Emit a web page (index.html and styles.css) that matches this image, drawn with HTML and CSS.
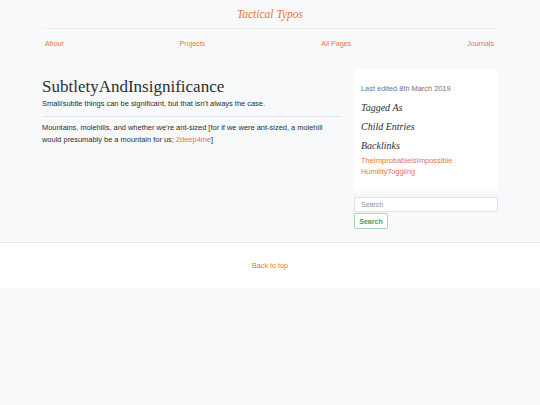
FILE: index.html
```html
<!DOCTYPE html>
<html>
<head>
<meta charset="utf-8">
<link rel="stylesheet" href="styles.css">
</head>
<body>
<header class="container">
  <div class="site-title"><a href="#">Tactical Typos</a></div>
  <hr class="rule">
  <nav class="nav">
    <a href="#">About</a>
    <a href="#">Projects</a>
    <a href="#">All Pages</a>
    <a href="#">Journals</a>
  </nav>
</header>
<main class="container row">
  <article class="content">
    <h1 class="page-title">SubtletyAndInsignificance</h1>
    <p class="lead">Small/subtle things can be significant, but that isn't always the case.</p>
    <hr class="rule divider">
    <p class="body-text">Mountains, molehills, and whether we're ant-sized [for if we were ant-sized, a molehill would presumably be a mountain for us; <a href="#">2deep4me</a>]</p>
  </article>
  <aside class="sidebar">
    <div class="card">
      <p class="meta">Last edited 8th March 2019</p>
      <h3 class="side-head">Tagged As</h3>
      <h3 class="side-head">Child Entries</h3>
      <h3 class="side-head">Backlinks</h3>
      <ul class="links">
        <li><a href="#">TheImprobableIsImpossible</a></li>
        <li><a href="#">HumilityToggling</a></li>
      </ul>
    </div>
    <form class="search">
      <input class="search-input" type="text" placeholder="Search">
      <button class="search-btn" type="button">Search</button>
    </form>
  </aside>
</main>
<footer class="footer">
  <a href="#">Back to top</a>
</footer>
</body>
</html>
```
FILE: styles.css
```css
html, body {
  margin: 0;
  padding: 0;
}
body {
  background: #f8f9fa;
  font-family: "Liberation Sans", Arial, sans-serif;
  color: #2b2f33;
  font-size: 7.45px;
}
a {
  color: #e8763c;
  text-decoration: none;
}
.container {
  width: 456px;
  margin: 0 auto;
}
.site-title {
  padding-top: 6px;
  text-align: center;
  font-family: "Liberation Serif", "Times New Roman", serif;
  font-style: italic;
  font-size: 11.5px;
  line-height: 16px;
  height: 16px;
  margin-bottom: 6px;
}
.rule {
  border: 0;
  border-top: 1px solid #eceef0;
  margin: 0;
  height: 0;
}
.nav {
  display: flex;
  justify-content: space-between;
  padding: 0 4px 0 3px;
  margin-top: 10px;
  line-height: 10px;
  font-size: 7.1px;
}
.row {
  display: flex;
  gap: 12px;
  margin-top: 20px;
  align-items: flex-start;
}
.content {
  width: 300px;
}
.page-title {
  font-family: "Liberation Serif", "Times New Roman", serif;
  font-weight: normal;
  font-size: 17px;
  line-height: 20px;
  margin: 8px 0 2px;
  color: #2b2f33;
}
.lead {
  margin: 0 0 7px;
  line-height: 10px;
}
.divider {
  border-top-color: #e4e6e9;
}
.body-text {
  margin: 5px 0 0;
  line-height: 12px;
}
.sidebar {
  width: 144px;
}
.card {
  background: #fff;
  border-radius: 3px;
  padding: 15px 7px 14px 7px;
}
.meta {
  margin: 0;
  color: #6c757d;
  line-height: 10px;
  font-size: 7.4px;
}
.side-head {
  font-family: "Liberation Serif", "Times New Roman", serif;
  font-style: italic;
  font-weight: normal;
  font-size: 10px;
  line-height: 13px;
  margin: 6px 0 0;
  color: #2b2f33;
}
.meta + .side-head {
  margin-top: 7px;
}
.links {
  list-style: none;
  margin: 4px 0 0;
  padding: 0;
  line-height: 10.5px;
}
.search {
  margin: 6px 0 0;
}
.search-input {
  display: block;
  box-sizing: border-box;
  width: 144px;
  height: 15px;
  margin: 0;
  padding: 0 6px;
  border: 1px solid #dfe3e7;
  border-radius: 2px;
  background: #fff;
  font-family: "Liberation Sans", Arial, sans-serif;
  font-size: 7px;
  color: #495057;
  outline: none;
}
.search-input::placeholder {
  color: #8a9299;
}
.search-btn {
  display: block;
  box-sizing: border-box;
  height: 16px;
  width: 34px;
  margin: 1px 0 0;
  padding: 0;
  border: 1px solid #a7d8b2;
  border-radius: 2px;
  background: #fff;
  color: #3da35a;
  font-family: "Liberation Sans", Arial, sans-serif;
  font-weight: bold;
  font-size: 7px;
}
.footer {
  margin-top: 13px;
  background: #fff;
  border-top: 1px solid #e6e8ea;
  height: 45px;
  display: flex;
  align-items: center;
  justify-content: center;
  font-size: 7.2px;
}
```
